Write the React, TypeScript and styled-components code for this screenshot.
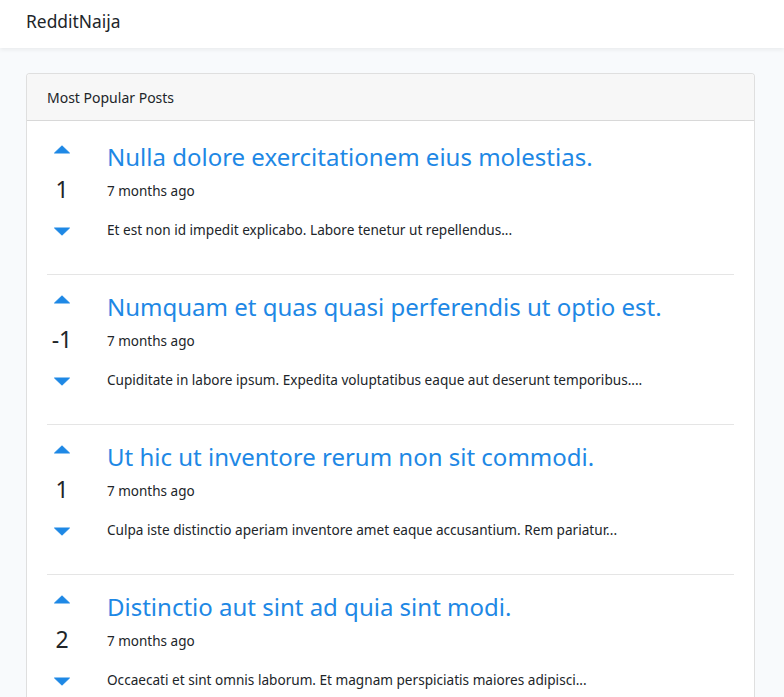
import React from "react";
import styled, { createGlobalStyle } from "styled-components";

const GlobalStyle = createGlobalStyle`
  html, body { margin: 0; padding: 0; }
  body {
    background: #f8fafc;
    font-family: "Noto Sans", Lato, "Liberation Sans", sans-serif;
    color: #212529;
    -webkit-font-smoothing: antialiased;
  }
  * { box-sizing: border-box; }
`;

const NavBar = styled.nav`
  height: 48px;
  background: #fff;
  box-shadow: 0 2px 4px rgba(0, 0, 0, 0.06);
  display: flex;
  align-items: center;
  padding: 0 26px 6px;
`;

const Brand = styled.a`
  font-size: 17.4px;
  color: #212529;
  text-decoration: none;
`;

const Main = styled.main`
  padding: 25px 29px 24px 26px;
`;

const Card = styled.section`
  background: #fff;
  border: 1px solid rgba(0, 0, 0, 0.125);
  border-radius: 4px;
  overflow: hidden;
`;

const CardHeader = styled.header`
  height: 47px;
  background: #f7f7f7;
  border-bottom: 1px solid rgba(0, 0, 0, 0.125);
  display: flex;
  align-items: center;
  padding: 0 20px;
  font-size: 14px;
`;

const CardBody = styled.div`
  padding: 20px 20px 0;
`;

const Post = styled.article`
  display: grid;
  grid-template-columns: 30px 1fr;
  column-gap: 30px;
  height: 117px;
`;

const Votes = styled.div`
  display: flex;
  flex-direction: column;
  align-items: center;
`;

const Arrow = styled.button<{ $down?: boolean }>`
  border: 0;
  background: none;
  padding: 0;
  margin: ${(p) => (p.$down ? "0" : "4px 0 0")};
  width: 18px;
  height: 9px;
  display: flex;
  cursor: pointer;
  color: #1e88e5;
`;

const Score = styled.div`
  font-size: 23px;
  line-height: 28px;
  margin: 21px 0 24px;
`;

const Content = styled.div`
  display: flex;
  flex-direction: column;
`;

const Title = styled.a`
  font-size: 24px;
  line-height: 32px;
  color: #1e88e5;
  text-decoration: none;
`;

const DateLine = styled.div`
  font-size: 13.5px;
  line-height: 22px;
  margin-top: 7px;
`;

const Excerpt = styled.p`
  font-size: 13.6px;
  line-height: 20px;
  margin: 18px 0 0;
`;

const Divider = styled.hr`
  border: 0;
  border-top: 1px solid rgba(0, 0, 0, 0.1);
  margin: 16px 0;
`;

const Caret = ({ down }: { down?: boolean }) => (
  <svg width="18" height="9" viewBox="0 0 18 9">
    <path
      d={down ? "M1.5 1 L16.5 1 L9 8.2 Z" : "M1.5 8 L16.5 8 L9 0.8 Z"}
      fill="currentColor"
      stroke="currentColor"
      strokeWidth="1"
      strokeLinejoin="round"
    />
  </svg>
);

const posts = [
  {
    score: 1,
    title: "Nulla dolore exercitationem eius molestias.",
    body: "Et est non id impedit explicabo. Labore tenetur ut repellendus...",
  },
  {
    score: -1,
    title: "Numquam et quas quasi perferendis ut optio est.",
    body: "Cupiditate in labore ipsum. Expedita voluptatibus eaque aut deserunt temporibus....",
  },
  {
    score: 1,
    title: "Ut hic ut inventore rerum non sit commodi.",
    body: "Culpa iste distinctio aperiam inventore amet eaque accusantium. Rem pariatur...",
  },
  {
    score: 2,
    title: "Distinctio aut sint ad quia sint modi.",
    body: "Occaecati et sint omnis laborum. Et magnam perspiciatis maiores adipisci...",
  },
  {
    score: 0,
    title: "Voluptas quia aut dolorem quo eos.",
    body: "Aut rerum et voluptatem. Sit quia aliquam consequatur...",
  },
];

export default function App() {
  return (
    <>
      <GlobalStyle />
      <NavBar>
        <Brand href="#">RedditNaija</Brand>
      </NavBar>
      <Main>
        <Card>
          <CardHeader>Most Popular Posts</CardHeader>
          <CardBody>
            {posts.map((p, i) => (
              <React.Fragment key={i}>
                <Post>
                  <Votes>
                    <Arrow aria-label="upvote">
                      <Caret />
                    </Arrow>
                    <Score>{p.score}</Score>
                    <Arrow $down aria-label="downvote">
                      <Caret down />
                    </Arrow>
                  </Votes>
                  <Content>
                    <Title href="#">{p.title}</Title>
                    <DateLine>7 months ago</DateLine>
                    <Excerpt>{p.body}</Excerpt>
                  </Content>
                </Post>
                <Divider />
              </React.Fragment>
            ))}
          </CardBody>
        </Card>
      </Main>
    </>
  );
}
